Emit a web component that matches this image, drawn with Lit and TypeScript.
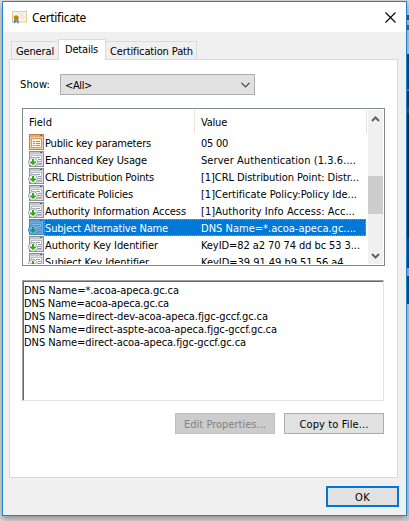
import { LitElement, html, css, svg } from "lit";
import { customElement, property } from "lit/decorators.js";

/** One line of text, tracked so that it fills a given width. */
@customElement("fit-text")
class FitText extends LitElement {
  static styles = css`
    :host { display: inline-block; white-space: pre; }
  `;
  @property() text = "";
  @property({ type: Number }) w = 0;
  render() { return html`<span>${this.text}</span>`; }
  updated() {
    const s = this.renderRoot.querySelector("span") as HTMLElement;
    s.style.letterSpacing = "0";
    const natural = s.getBoundingClientRect().width;
    s.style.letterSpacing = `${(this.w - natural) / this.text.length}px`;
  }
}

const t = (text: string, w: number) => html`<fit-text .text=${text} .w=${w}></fit-text>`;

type Row = [string, number, string, number];
const rows: Row[] = [
  ["Public key parameters", 106, "05 00", 27],
  ["Enhanced Key Usage", 102, "Server Authentication (1.3.6....", 155],
  ["CRL Distribution Points", 109, "[1]CRL Distribution Point: Distr...", 158],
  ["Certificate Policies", 88, "[1]Certificate Policy:Policy Ide...", 156],
  ["Authority Information Access", 141, "[1]Authority Info Access: Acc...", 154],
  ["Subject Alternative Name", 123, "DNS Name=*.acoa-apeca.gc....", 155],
  ["Authority Key Identifier", 113, "KeyID=82 a2 70 74 dd bc 53 3...", 159],
  ["Subject Key Identifier", 104, "KeyID=39 91 49 b9 51 56 a4 ...", 155],
];
const names: [string, number][] = [
  ["DNS Name=*.acoa-apeca.gc.ca", 155],
  ["DNS Name=acoa-apeca.gc.ca", 145],
  ["DNS Name=direct-dev-acoa-apeca.fjgc-gccf.gc.ca", 244],
  ["DNS Name=direct-aspte-acoa-apeca.fjgc-gccf.gc.ca", 253],
  ["DNS Name=direct-acoa-apeca.fjgc-gccf.gc.ca", 222],
];

const propertyIcon = html`<svg width="17" height="17" viewBox="0 0 17 17" shape-rendering="crispEdges">
  <rect x="1.5" y=".5" width="14" height="15" fill="#f3cda3" stroke="#b98350"/>
  <path d="M2 1h13v2H2z" fill="#e2a96f"/><path d="M12 1h2v1h-2z" fill="#8a5a30"/>
  <rect x="3.500" y="4.500" width="10" height="9" fill="#fff3e2" stroke="#d59b62"/>
  <path d="M5 7h2v1H5zM8 7h4v1H8zM5 9h2v1H5zM8 9h4v1H8zM5 11h2v1H5zM8 11h4v1H8z" fill="#bd8752"/>
</svg>`;
const extensionIcon = (sel: boolean) => html`<svg width="17" height="17" viewBox="0 0 17 17">
  <g shape-rendering="crispEdges">
    <rect x="1.5" y=".5" width="14" height="15" fill="#dfe1e4" stroke="#8b9097"/>
    <path d="M2 1h13v2H2z" fill="#c3c7cc"/><path d="M12 1h2v1h-2z" fill="#59616c"/>
    <rect x="3.500" y="4.500" width="10" height="9" fill="#fafbfd" stroke="#b9bec6"/>
    <path d="M5 6h2v1H5zM8 6h4v1H8zM10 8h3v1h-3zM10 10h3v1h-3zM10 12h3v1h-3z" fill="#9096a8"/>
  </g>
  <circle cx="5" cy="11" r="4.400" fill="#f4f7f3" stroke="#8f9793" stroke-width=".9"/>
  <path d="M4 8h2v2.500h2V11.500L5 14 2 11.500V10.500h2z" fill="#34a81f"/>
  ${sel ? svg`<path d="M1 0h15v16H4A5 5 0 0 1 1 8z" fill="#0078d7" fill-opacity=".5"/>` : ""}
</svg>`;

@customElement("app-root")
class AppRoot extends LitElement {
  static styles = css`
    * { box-sizing: border-box; }
    :host { display: block; position: relative; width: 409px; height: 521px; overflow: hidden;
      background: #dedede; font: 11px/17px "DejaVu Sans Condensed", "DejaVu Sans", sans-serif; color: #000; }
    .behind { position: absolute; right: 0; top: 0; width: 3px; height: 521px;
      background: linear-gradient(#d3d3d3 0 15px, #555 15px 20px, #c8c8c8 20px 25px, #666 25px 30px, #d0d0d0 30px 54px, #0d4d6c 54px 89px, #6d7d86 89px 91px, #333b40 91px 107px, #574c39 107px 113px, #292d2e 113px 238px, #075374 238px 268px, #a9bcc5 268px 276px, #075374 276px 304px, #d2d2d2 304px); }
    .window { position: relative; width: 405px; height: 515px; margin: 1px 0 0 2px; background: #f0f0f0;
      border: 1px solid #1883d7; box-shadow: 0 3px 7px rgba(0,0,0,.38); display: flex; flex-direction: column; }
    .title { height: 30px; flex: none; background: #fff; display: flex; align-items: center; padding: 0 10px 0 9px; }
    .title .name { flex: 1; padding-left: 5px; font: 12px/17px "Noto Sans", "Open Sans", sans-serif; }
    svg { display: block; flex: none; }
    .tabs { display: flex; align-items: flex-end; height: 27px; flex: none; padding-left: 8px; }
    .tab { height: 18px; border: 1px solid #d9d9d9; border-bottom: 0; padding-left: 4px; line-height: 19px; width: 48px; }
    .tab.on { height: 21px; background: #fff; width: 48px; margin: 0 -1px -1px; z-index: 1; padding-left: 6px; line-height: 19px; }
    .tab.path { width: 92px; padding-left: 4px; }
    .page { width: 389px; height: 419px; flex: none; margin-left: 6px; border: 1px solid #d9d9d9; background: #fff; padding: 14px 0 0 12px; }
    .show { display: flex; align-items: center; height: 21px; }
    .show .lab { width: 38px; margin-left: -2px; line-height: 19px; }
    .combo { width: 195px; height: 21px; border: 1px solid #adadad; background: #e1e1e1; display: flex; align-items: center;
      justify-content: space-between; padding: 0 4px; margin-left: 2px; line-height: 19px; }
    .combo fit-text { padding-top: 2px; }
    .list { width: 363px; height: 158px; margin-top: 13px; border: 1px solid #828790; padding: 1px; display: flex; overflow: hidden; }
    .grid { width: 343px; height: 154px; overflow: hidden; flex: none; }
    .head { display: flex; height: 24px; line-height: 25px; }
    .head div { border-right: 1px solid #e5e5e5; }
    .head .f { width: 171px; padding-left: 5px; }
    .head .v { width: 172px; padding-left: 6px; }
    .row { display: flex; height: 17px; }
    .row .ic { width: 20px; padding-left: 4px; }
    .row .cells { display: flex; width: 322px; line-height: 19px; }
    .row .f { width: 157px; padding-left: 1px; }
    .row.sel .cells { background: #0078d7; color: #fff; outline: 1px dotted #ff8728; outline-offset: -1px; }
    .bar { width: 15px; margin-left: 1px; background: #f0f0f0; height: 154px; display: flex; flex-direction: column; align-items: center; }
    .thumb { width: 15px; height: 38px; background: #cdcdcd; margin: 49px 0 33px; flex: none; }
    .detail { width: 362px; height: 121px; margin-top: 14px; border: 1px solid #e3e3e3; border-top-color: #a0a0a0; border-left-color: #a0a0a0;
      box-shadow: inset 1px 1px #696969; padding: 3px 0 0 1px; line-height: 13px; }
    .detail div { height: 13px; }
    .buttons { display: flex; gap: 9px; margin: 12px 0 0 153px; }
    .btn { width: 100px; height: 21px; border: 1px solid #adadad; background: #e1e1e1; line-height: 21px; text-align: center; }
    .btn.off { background: #ccc; border-color: #bfbfbf; color: #838383; }
    .btn.ok { width: 73px; border: 2px solid #0078d7; line-height: 19px; margin: 8px 0 0 323px; flex: none; }
  `;
  render() {
    return html`<div class="behind"></div>
    <div class="window">
      <div class="title">
        <svg width="15" height="13" viewBox="0 0 15 13">
          <rect x=".5" y=".5" width="14" height="10.5" fill="#f8f4ea" stroke="#e8c891"/>
          <path d="M6 3h6M8 5h5M8 7h4" stroke="#d9dde0" stroke-width=".8"/>
          <path d="M2.5 8 1.5 12.400l2-1 .7-2 .8 2 2 1L6 8z" fill="#2c7ad6"/>
          <circle cx="4.200" cy="6.800" r="2.600" fill="#c99219"/><circle cx="4.200" cy="6.800" r="1.200" fill="#a87509"/>
        </svg>
        <div class="name">${t("Certificate", 54)}</div>
        <svg width="11" height="11" viewBox="0 0 11 11"><path d="M.5.5l10 10M10.500.5l-10 10" stroke="#000" stroke-width="1.1"/></svg>
      </div>
      <div class="tabs">
        <div class="tab">${t("General", 38)}</div>
        <div class="tab on">${t("Details", 33)}</div>
        <div class="tab path">${t("Certification Path", 83)}</div>
      </div>
      <div class="page">
        <div class="show"><div class="lab">${t("Show:", 30)}</div>
          <div class="combo">${t("<All>", 27)}<svg width="9" height="6" viewBox="0 0 9 6"><path d="M.5.8l4 4 4-4" fill="none" stroke="#444" stroke-width="1.2"/></svg></div>
        </div>
        <div class="list">
          <div class="grid">
            <div class="head"><div class="f">${t("Field", 23)}</div><div class="v">${t("Value", 26)}</div></div>
            ${rows.map(([f, fw, v, vw], i) => html`<div class="row ${i === 5 ? "sel" : ""}">
              <div class="ic">${i ? extensionIcon(i === 5) : propertyIcon}</div>
              <div class="cells"><div class="f">${t(f, fw)}</div><div>${t(v, vw)}</div></div></div>`)}
          </div>
          <div class="bar">
            <svg width="9" height="17" viewBox="0 0 9 17"><path d="M1 11l3.500-3.500L8 11" fill="none" stroke="#606060" stroke-width="2"/></svg>
            <div class="thumb"></div>
            <svg width="9" height="17" viewBox="0 0 9 17"><path d="M1 7l3.500 3.500L8 7" fill="none" stroke="#606060" stroke-width="2"/></svg>
          </div>
        </div>
        <div class="detail">${names.map(([n, w]) => html`<div>${t(n, w)}</div>`)}</div>
        <div class="buttons"><div class="btn off">${t("Edit Properties...", 82)}</div><div class="btn">${t("Copy to File...", 69)}</div></div>
      </div>
      <div class="btn ok">${t("OK", 15)}</div>
    </div>`;
  }
}
